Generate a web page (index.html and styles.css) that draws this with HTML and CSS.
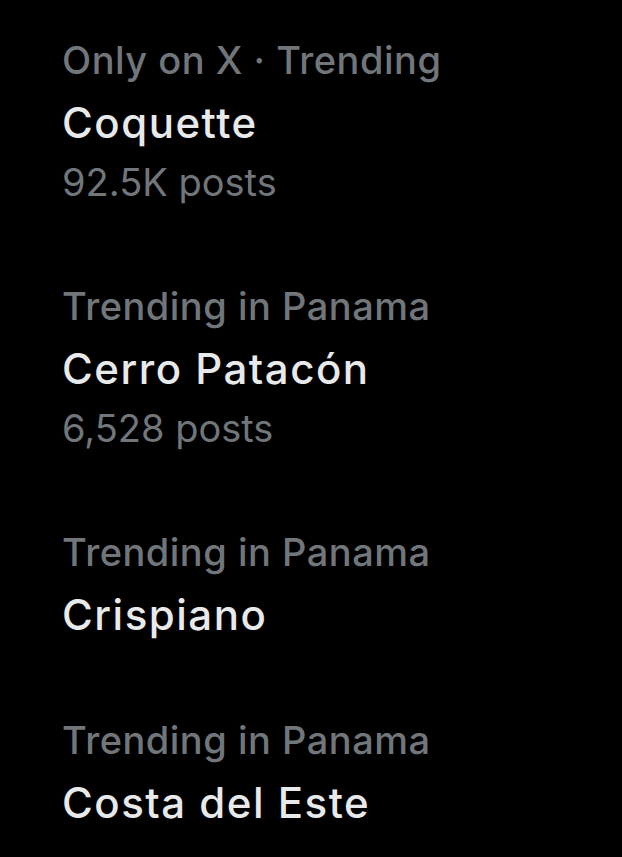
FILE: index.html
```html
<!DOCTYPE html>
<html lang="en">
  <head>
    <meta charset="UTF-8" />
    <meta name="viewport" content="width=device-width, initial-scale=1.0" />
    <title>Trends</title>

    <link rel="stylesheet" href="styles.css">
  </head>
  <body>
    <ul class="trends">
      <li class="trend">
        <p class="trend-label">Only on X · Trending</p>
        <p class="trend-title">Coquette</p>
        <p class="trend-count">92.5K posts</p>
      </li>
      <li class="trend">
        <p class="trend-label">Trending in Panama</p>
        <p class="trend-title">Cerro Patacón</p>
        <p class="trend-count">6,528 posts</p>
      </li>
      <li class="trend">
        <p class="trend-label">Trending in Panama</p>
        <p class="trend-title">Crispiano</p>
      </li>
      <li class="trend">
        <p class="trend-label">Trending in Panama</p>
        <p class="trend-title">Costa del Este</p>
      </li>
    </ul>
  </body>
</html>
```

FILE: styles.css
```css
:root {
  --body-bg: #000000;
  --text-color: #e7e9ea;
  --muted-color: #71767b;
}

* {
  box-sizing: border-box;
}

body {
  margin: 0;
  background: var(--body-bg);
  font-family: Inter, "Noto Sans", sans-serif;
  height: 100vh;
  overflow: hidden;
}

.trends {
  list-style: none;
  margin: 0;
  padding: 28px 0 0 62px;
  display: flex;
  flex-direction: column;
  gap: 63px;
}

.trend p {
  margin: 0;
}

.trend-label {
  color: var(--muted-color);
  font-size: 38px;
  font-weight: 500;
  letter-spacing: 0.5px;
  line-height: 65px;
}

.trend-title {
  color: var(--text-color);
  font-size: 42px;
  font-weight: 500;
  letter-spacing: 1.5px;
  line-height: 60px;
}

.trend-count {
  color: var(--muted-color);
  font-size: 38px;
  font-weight: 400;
  line-height: 58px;
}
```
